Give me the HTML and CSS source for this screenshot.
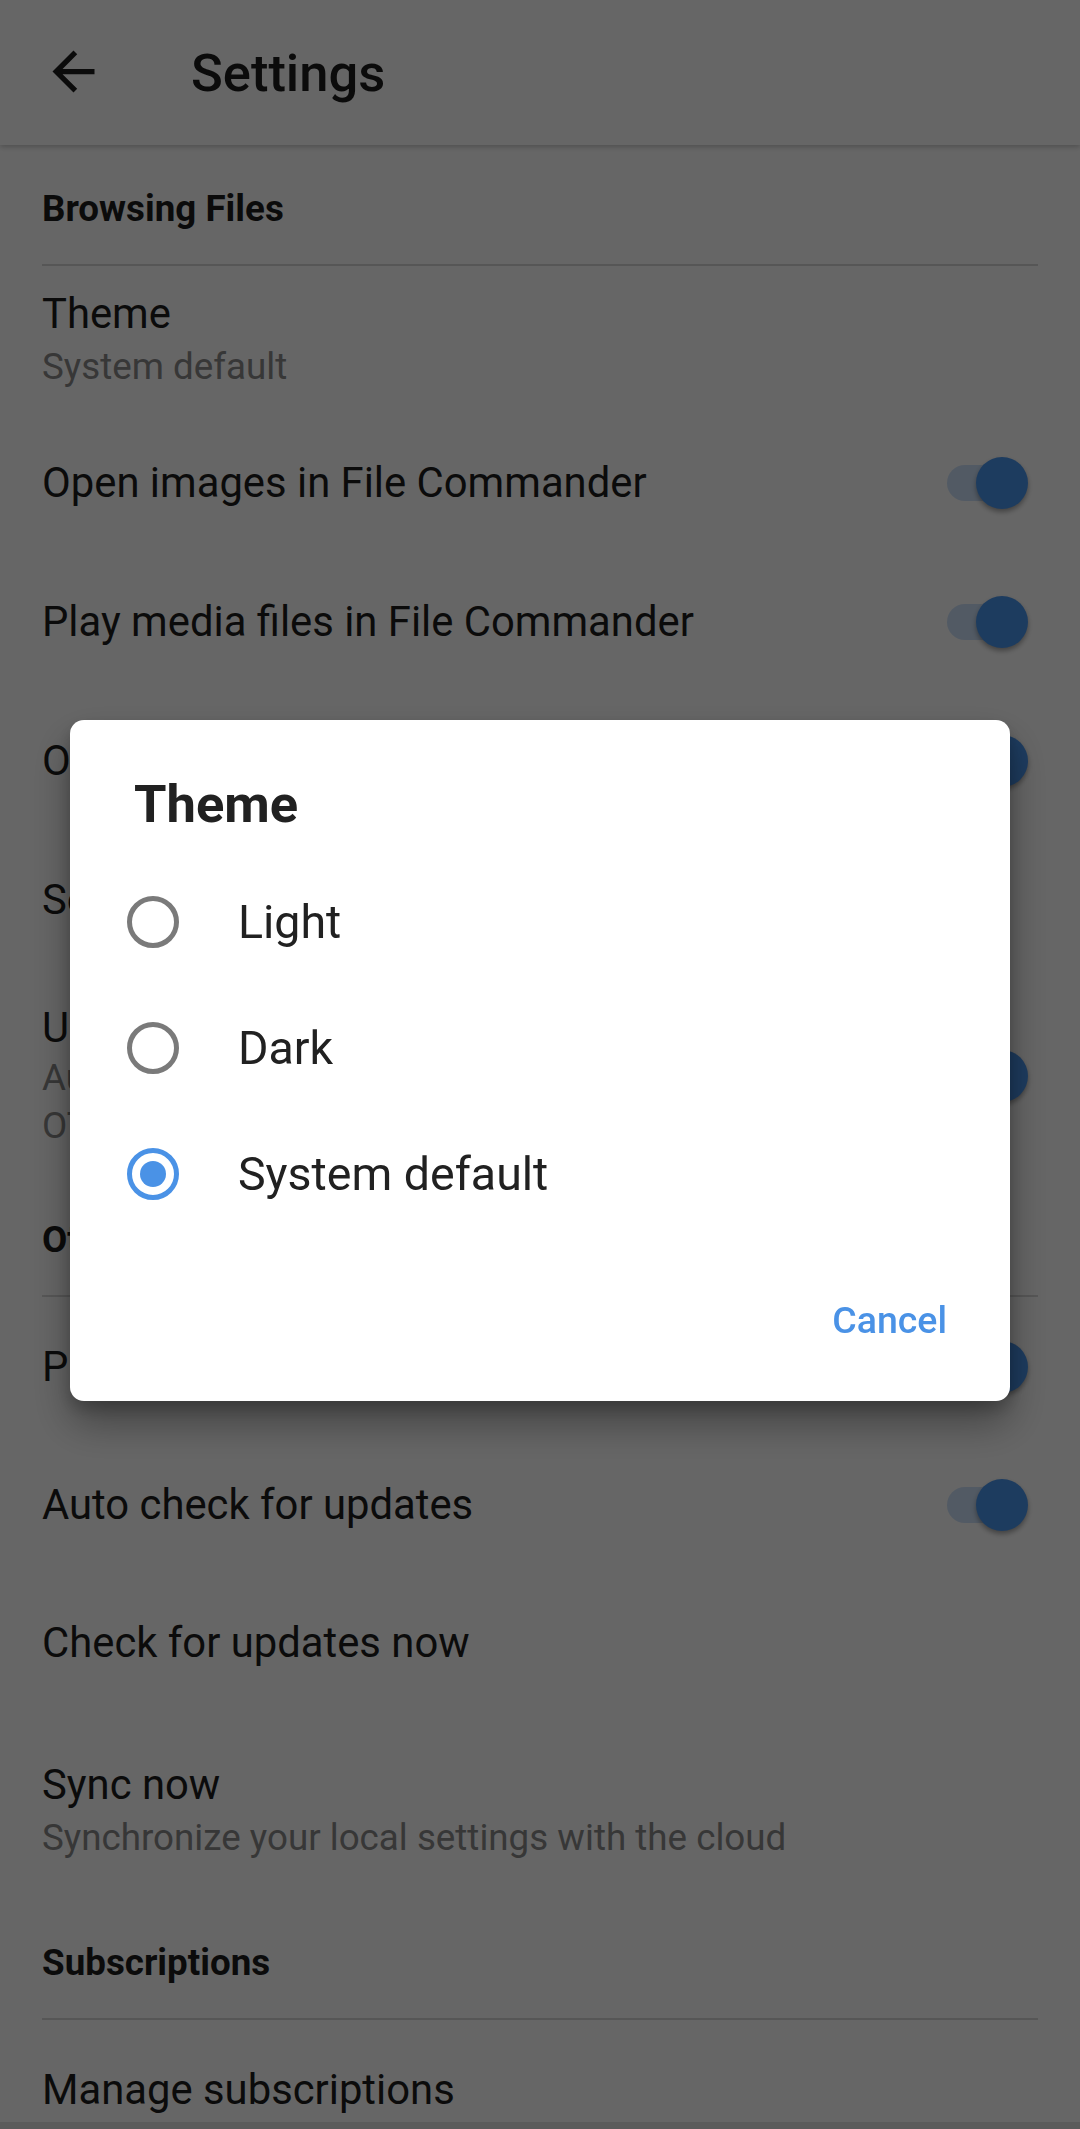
FILE: index.html
```html
<!DOCTYPE html>
<html lang="en">
<head>
    <meta charset="UTF-8">
    <meta name="viewport" content="width=device-width, initial-scale=1.0">
    <title>Settings</title>
    <link rel="stylesheet" href="styles.css">
</head>
<body>

    <!-- Toolbar -->
    <header class="app-bar">
        <button class="back-btn" aria-label="Back">
            <svg viewBox="0 0 24 24" width="63" height="63"><path d="M20 11H7.83l5.59-5.59L12 4l-8 8 8 8 1.41-1.41L7.83 13H20v-2z"/></svg>
        </button>
        <h1 class="app-title">Settings</h1>
    </header>

    <!-- Preferences -->
    <main class="prefs">
        <div class="pref-category">Browsing Files</div>

        <div class="pref pref-two h-theme">
            <div class="pref-text">
                <div class="pref-title">Theme</div>
                <div class="pref-summary">System default</div>
            </div>
        </div>

        <div class="pref">
            <div class="pref-title">Open images in File Commander</div>
            <span class="switch"><span class="track"></span><span class="thumb"></span></span>
        </div>

        <div class="pref">
            <div class="pref-title">Play media files in File Commander</div>
            <span class="switch"><span class="track"></span><span class="thumb"></span></span>
        </div>

        <div class="pref">
            <div class="pref-title">Open archives in File Commander</div>
            <span class="switch"><span class="track"></span><span class="thumb"></span></span>
        </div>

        <div class="pref">
            <div class="pref-title">Set home folder</div>
        </div>

        <div class="pref pref-two h-usb">
            <div class="pref-text">
                <div class="pref-title">USB auto open</div>
                <div class="pref-summary">Automatically open File Commander when a USB<br>OTG device is connected</div>
            </div>
            <span class="switch"><span class="track"></span><span class="thumb"></span></span>
        </div>

        <div class="pref-category">Other</div>

        <div class="pref">
            <div class="pref-title">Push notifications</div>
            <span class="switch"><span class="track"></span><span class="thumb"></span></span>
        </div>

        <div class="pref h-auto">
            <div class="pref-title">Auto check for updates</div>
            <span class="switch"><span class="track"></span><span class="thumb"></span></span>
        </div>

        <div class="pref h-check">
            <div class="pref-title">Check for updates now</div>
        </div>

        <div class="pref pref-two h-sync">
            <div class="pref-text">
                <div class="pref-title">Sync now</div>
                <div class="pref-summary">Synchronize your local settings with the cloud</div>
            </div>
        </div>

        <div class="pref-category">Subscriptions</div>

        <div class="pref">
            <div class="pref-title">Manage subscriptions</div>
        </div>
    </main>

    <div class="nav-edge"></div>

    <!-- Theme dialog -->
    <div class="scrim">
        <div class="dialog">
            <h2 class="dialog-title">Theme</h2>
            <div class="choice-list">
                <label class="choice">
                    <span class="radio"></span>
                    <span class="choice-label">Light</span>
                </label>
                <label class="choice">
                    <span class="radio"></span>
                    <span class="choice-label">Dark</span>
                </label>
                <label class="choice">
                    <span class="radio checked"></span>
                    <span class="choice-label">System default</span>
                </label>
            </div>
            <div class="dialog-actions">
                <button class="text-btn">Cancel</button>
            </div>
        </div>
    </div>

</body>
</html>
```

FILE: styles.css
```css
/* Reset and basic styles */
html, body {
    padding: 0;
    margin: 0;
    background: #ffffff;
    font-family: Roboto, "Noto Sans", Arial, sans-serif;
    color: #212121;
}

body {
    height: 2129px;
    overflow: hidden;
}

/* Toolbar */
.app-bar {
    height: 145px;
    display: flex;
    align-items: center;
    background: #ffffff;
    box-shadow: 0 2px 5px rgba(0, 0, 0, 0.22);
    position: relative;
    z-index: 1;
}

.back-btn {
    margin-left: 42px;
    margin-top: -2px;
    width: 63px;
    height: 63px;
    padding: 0;
    border: none;
    background: none;
    display: flex;
}

.back-btn svg {
    fill: #1c1c1c;
}

.app-title {
    margin: 0 0 0 86px;
    font-size: 52.5px;
    font-weight: 500;
    color: #1c1c1c;
}

/* Preference list */
.prefs {
    display: flex;
    flex-direction: column;
}

.pref-category {
    margin: 0 42px;
    padding: 42px 0 33px;
    line-height: 44px;
    font-size: 36.75px;
    font-weight: 700;
    color: #1c1c1c;
    border-bottom: 2px solid #d8d8d8;
}

.pref {
    height: 139px;
    margin: 0 42px;
    display: flex;
    align-items: center;
    justify-content: space-between;
    box-sizing: border-box;
}

.pref-title {
    font-size: 41.8px;
    line-height: 56px;
    color: #1c1c1c;
}

.pref-summary {
    font-size: 36.75px;
    line-height: 50px;
    color: #8a8a8a;
}

.pref-two {
    height: auto;
}

.h-theme {
    padding: 20px 0 21px;
}

.h-usb {
    padding: 33px 0 26px;
}

.h-usb .pref-title {
    line-height: 52px;
}

.h-usb .pref-summary {
    line-height: 48px;
}

.h-sync {
    padding: 44px 0 36px;
}

.h-auto {
    height: 137px;
}

.h-check {
    height: 140px;
}

/* Switch */
.switch {
    position: relative;
    width: 81px;
    height: 52px;
    margin-right: 10px;
    flex-shrink: 0;
}

.switch .track {
    position: absolute;
    left: 0;
    top: 8px;
    width: 74px;
    height: 36px;
    border-radius: 18px;
    background: rgba(74, 147, 232, 0.28);
}

.switch .thumb {
    position: absolute;
    right: 0;
    top: 0;
    width: 52px;
    height: 52px;
    border-radius: 50%;
    background: #4a96ee;
    box-shadow: 0 3px 5px rgba(0, 0, 0, 0.35);
}

/* System nav edge */
.nav-edge {
    position: fixed;
    left: 0;
    right: 0;
    bottom: 0;
    height: 7px;
    background: #e4e4e4;
}

/* Dialog */
.scrim {
    position: fixed;
    inset: 0;
    background: rgba(0, 0, 0, 0.6);
    display: flex;
    align-items: center;
    justify-content: center;
    padding-bottom: 8px;
    z-index: 5;
}

.dialog {
    width: 940px;
    background: #ffffff;
    border-radius: 14px;
    box-shadow: 0 22px 40px rgba(0, 0, 0, 0.35), 0 8px 16px rgba(0, 0, 0, 0.2);
}

.dialog-title {
    margin: 0;
    padding: 52px 64px 0;
    line-height: 64px;
    font-size: 52.5px;
    font-weight: 700;
    color: #212121;
}

.choice-list {
    margin-top: 23px;
}

.choice {
    height: 126px;
    padding-left: 57px;
    display: flex;
    align-items: center;
}

.radio {
    width: 52px;
    height: 52px;
    box-sizing: border-box;
    border: 5px solid #7a7a7a;
    border-radius: 50%;
    display: flex;
    align-items: center;
    justify-content: center;
    flex-shrink: 0;
}

.radio.checked {
    border-color: #4a92e6;
}

.radio.checked::after {
    content: "";
    width: 26px;
    height: 26px;
    border-radius: 50%;
    background: #4a92e6;
}

.choice-label {
    margin-left: 59px;
    font-size: 46.5px;
    color: #212121;
}

.dialog-actions {
    display: flex;
    justify-content: flex-end;
    padding: 56px 63px 54px;
}

.text-btn {
    padding: 0;
    border: none;
    background: none;
    font-family: inherit;
    font-size: 37.5px;
    font-weight: 500;
    line-height: 54px;
    color: #4a92e6;
}
```
